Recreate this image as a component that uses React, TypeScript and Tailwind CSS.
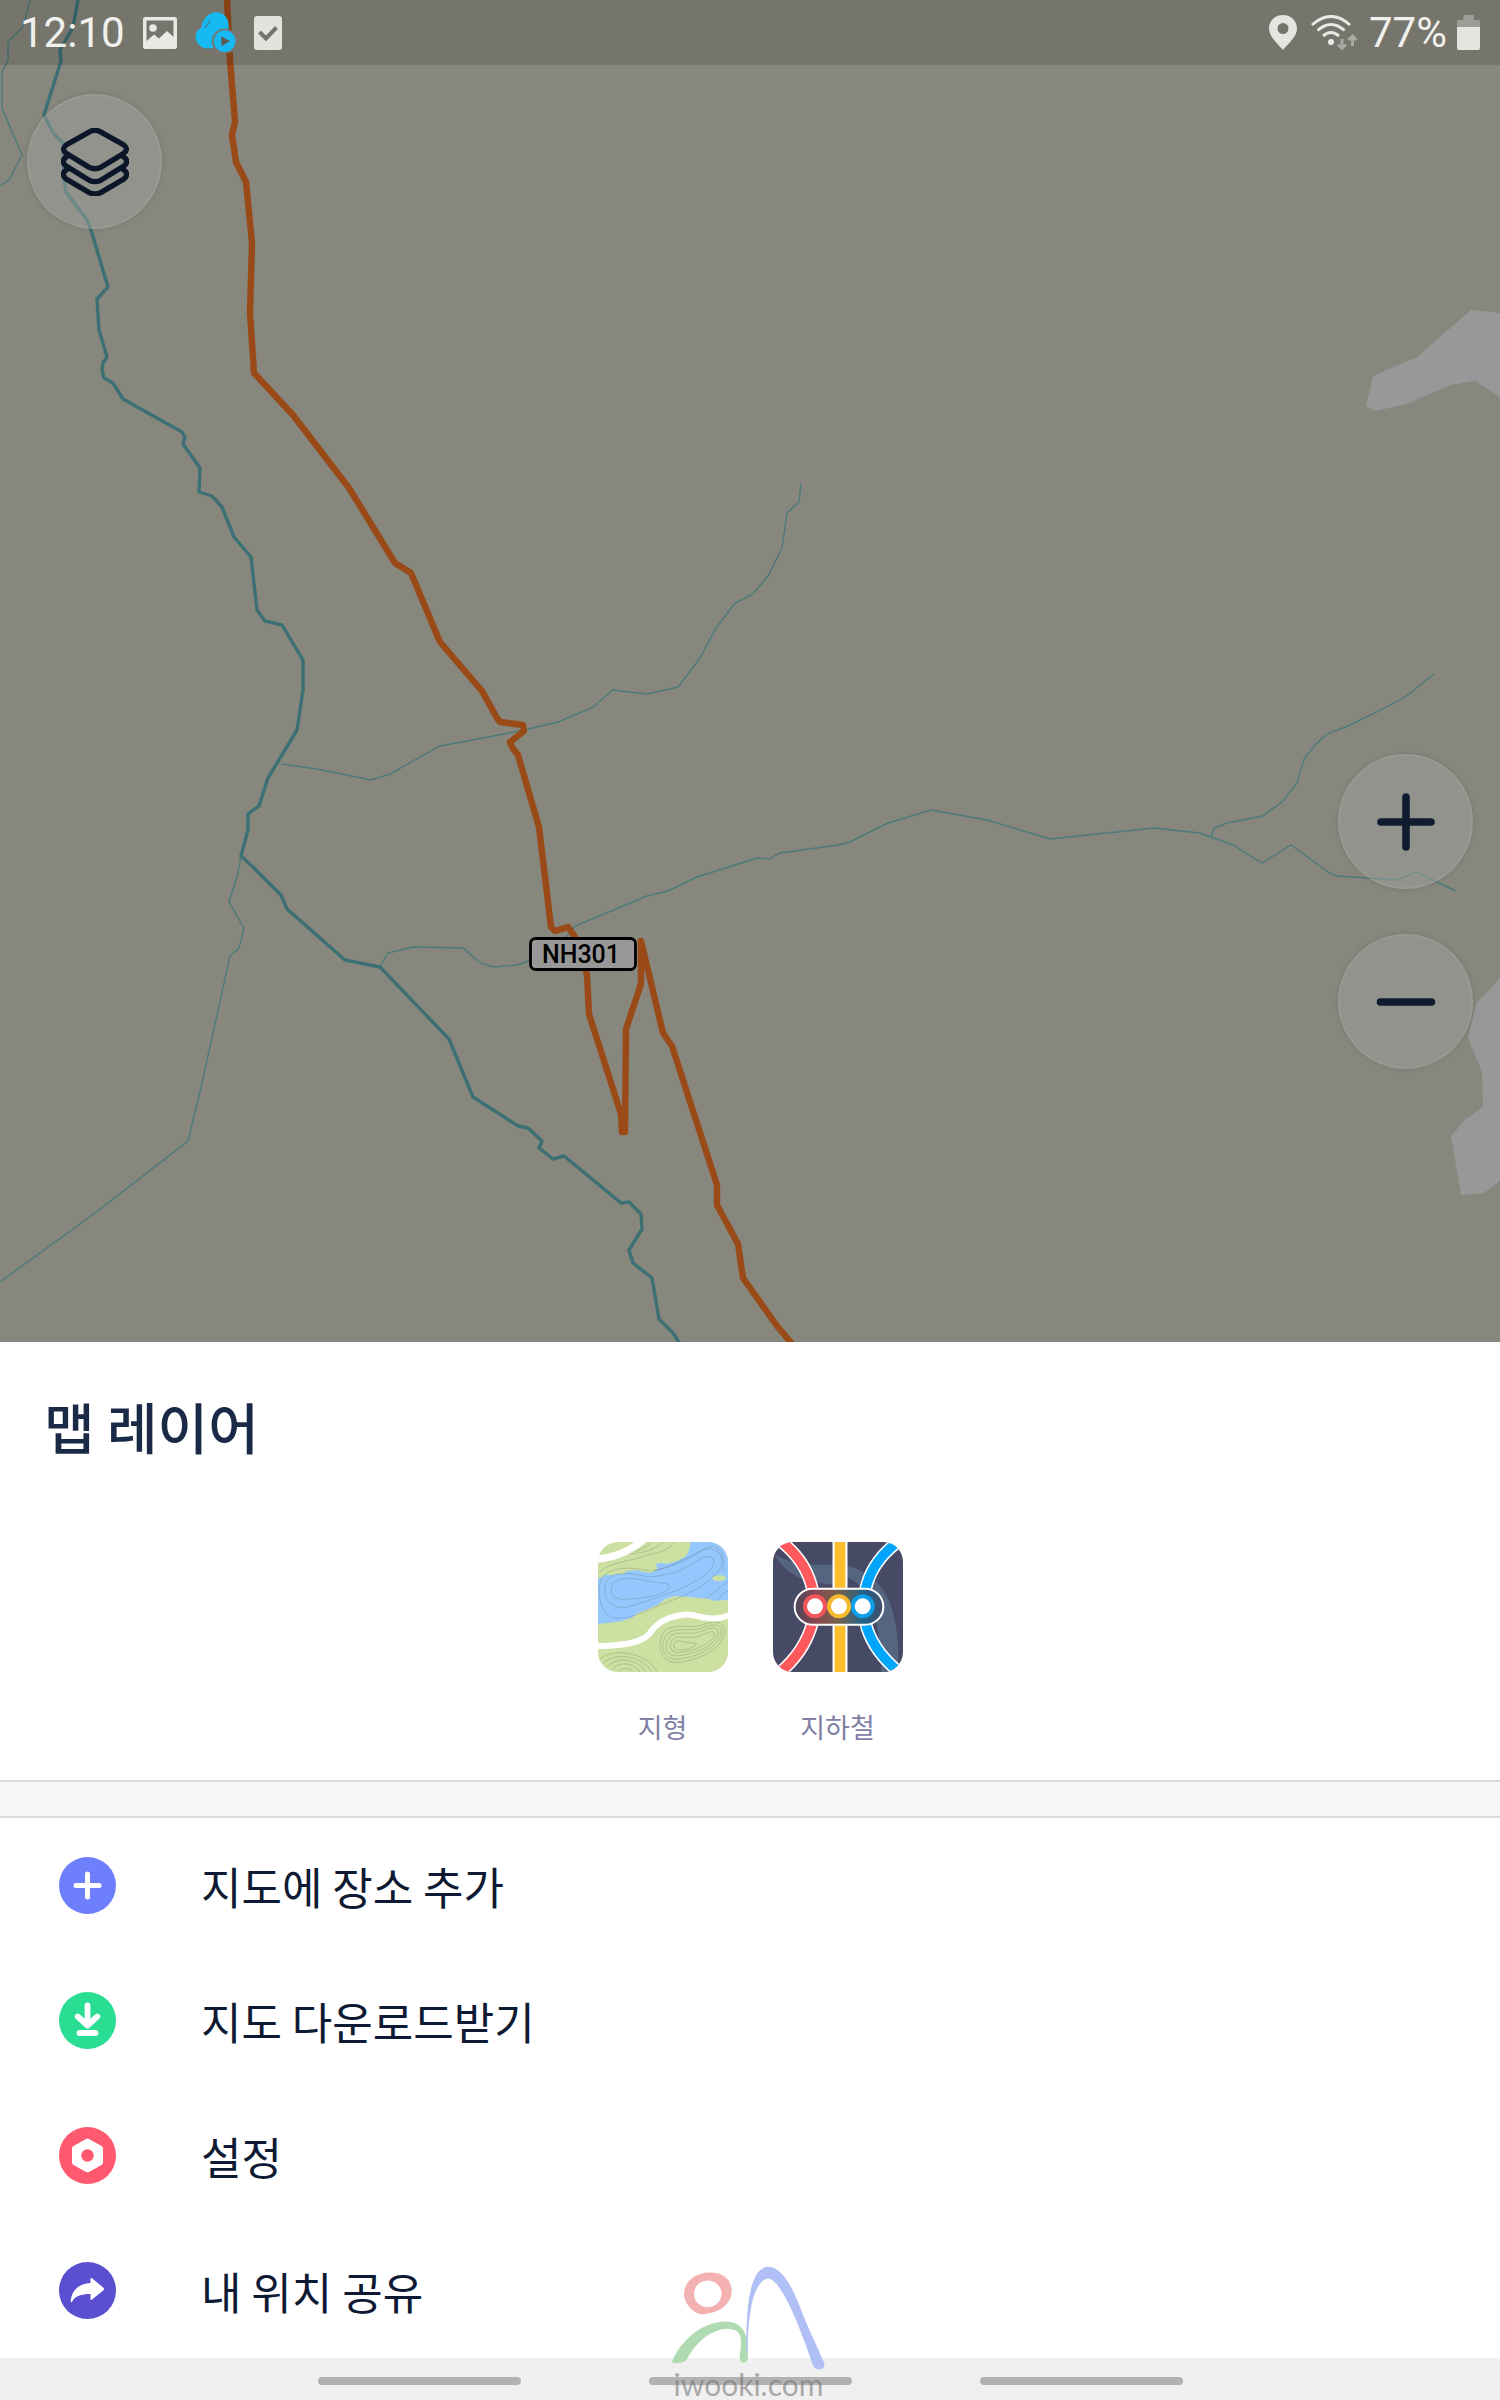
import React from 'react';

const THIN_STREAMS = [
  'M30 0 L23 27 L8 42 L8 60 L2 72 L2 108 L22 155 L9 180 L0 186',
  'M241 856 L238 873 L229 902 L244 928 L239 948 L230 956 L200 1092 L188 1141 L95 1213 L0 1282',
  'M281 764 L317 769 L371 780 L390 774 L440 746 L499 735 L528 729 L558 722 L592 708 L613 690 L647 694 L678 687 L700 658 L716 628 L735 603 L753 594 L768 576 L782 548 L787 513 L799 502 L801 484',
  'M380 967 L388 953 L413 947 L463 948 L479 962 L493 967 L517 965 L528 961 L568 935 L575 926 L647 896 L668 891 L697 877 L757 858 L769 859 L780 853 L838 845 L850 842 L888 823 L931 810 L987 820 L1050 839 L1154 828 L1200 833 L1233 845 L1262 863 L1291 845 L1328 872 L1337 876 L1367 878 L1397 880 L1416 872 L1456 891',
  'M1211 838 L1214 828 L1227 823 L1263 816 L1283 801 L1297 783 L1304 759 L1315 745 L1327 734 L1348 726 L1383 709 L1408 695 L1434 674',
];

const RIVER =
  'M78 0 L73 27 L60 50 L61 61 L44 115 L50 127 L54 134 L63 143 L64 180 L66 192 L87 220 L91 230 L108 287 L97 299 L99 330 L107 357 L103 363 L102 370 L104 378 L113 383 L123 399 L182 432 L185 437 L183 444 L200 468 L199 492 L212 496 L222 507 L234 537 L251 557 L257 610 L265 621 L282 625 L303 660 L303 690 L297 730 L268 778 L259 806 L248 814 L248 830 L241 856 L253 867 L281 895 L287 909 L345 960 L380 967 L449 1039 L473 1097 L518 1126 L528 1128 L542 1141 L539 1148 L553 1159 L564 1156 L621 1203 L629 1202 L641 1214 L642 1229 L629 1250 L633 1263 L652 1278 L659 1319 L673 1333 L680 1344';

const ROAD =
  'M227 0 L230 60 L235 122 L232 135 L236 162 L246 182 L252 243 L250 313 L254 373 L279 400 L293 415 L349 488 L395 563 L411 573 L440 642 L482 691 L497 718 L500 722 L523 725 L524 731 L510 742 L512 747 L518 755 L539 827 L551 927 L555 931 L568 927 L575 937 L587 975 L589 1014 L621 1114 L622 1132 L625 1132 L626 1029 L641 984 L641 941 L663 1033 L672 1046 L717 1185 L717 1205 L738 1244 L743 1278 L777 1326 L793 1345';

const MapCanvas: React.FC = () => (
  <svg
    className="absolute inset-0 h-full w-full"
    viewBox="0 0 1500 1342"
    preserveAspectRatio="xMinYMin slice"
    fill="none"
    aria-hidden="true"
  >
    <g fill="#989898">
      <path d="M1366 406 L1373 376 L1417 357 L1471 310 L1500 313 V397 L1475 381 L1450 385 L1407 404 L1375 411 Z" />
      <path d="M1500 978 L1476 1004 L1468 1038 L1482 1072 L1483 1107 L1466 1119 L1451 1136 L1461 1195 L1484 1193 L1500 1181 Z" />
    </g>
    <g stroke="#4c7b7b" strokeWidth="1.4">
      {THIN_STREAMS.map((d) => (
        <path key={d} d={d} />
      ))}
    </g>
    <path d={RIVER} stroke="#3c7074" strokeWidth="3.4" strokeLinejoin="round" />
    <path d={ROAD} stroke="#9a4a17" strokeWidth="6.4" strokeLinejoin="round" />
    <rect x="530.5" y="938.5" width="105" height="31" rx="5" fill="#989898" stroke="#000" strokeWidth="2.8" />
    <text x="581" y="963" textAnchor="middle" fill="#000" className="font-['Roboto',sans-serif] text-[25px] font-medium">
      NH301
    </text>
  </svg>
);

const PictureIcon = () => (
  <svg viewBox="0 0 34 32" className="h-8 w-[34px]" aria-hidden="true">
    <path
      fill="#e9e9e6"
      fillRule="evenodd"
      d="M2.5 0 H31.5 Q34 0 34 2.5 V29.5 Q34 32 31.5 32 H2.5 Q0 32 0 29.5 V2.5 Q0 0 2.5 0 Z M3.5 3.5 V24 L11 17.5 L16 21.5 L24 14 L30.5 20 V3.5 Z"
    />
    <circle cx="10" cy="11" r="3.8" fill="#e9e9e6" />
  </svg>
);

const CloudPlayIcon = () => (
  <svg viewBox="591 33 124 125" className="h-[41px] w-[41px]" fill="none" aria-hidden="true">
    <path
      fill="#16b9f2"
      d="M655 34 C677 34 693 50 693 74 V90 L645 143 C627 145 615 145 605 135 C586 118 588 92 610 80 C614 55 630 34 655 34 Z"
    />
    <path d="M635 60 Q631 72 620 80" stroke="#3c7f95" strokeWidth="4" strokeLinecap="round" />
    <circle cx="681" cy="122" r="36" fill="#16b9f2" stroke="#75756d" strokeWidth="6" />
    <path d="M671 107 L697 122 L671 137 Z" fill="#5f5850" />
  </svg>
);

const CheckBoxIcon = () => (
  <svg viewBox="0 0 28 34" className="h-[34px] w-7" fill="none" aria-hidden="true">
    <rect width="28" height="34" rx="3" fill="#e2e2df" />
    <path d="M5.5 16 L12 22.5 L22.5 11.5" stroke="#75756d" strokeWidth="4" />
  </svg>
);

const PinIcon = () => (
  <svg viewBox="0 0 28 35" className="h-[35px] w-7" aria-hidden="true">
    <path
      fill="#e4e4e1"
      fillRule="evenodd"
      d="M14 0 C22 0 28 6 28 13.5 C28 21 21 27 14 35 C7 27 0 21 0 13.5 C0 6 6 0 14 0 Z M14 8 A5.5 5.5 0 1 0 14 19 A5.5 5.5 0 1 0 14 8 Z"
    />
  </svg>
);

const WifiIcon = () => (
  <svg viewBox="0 0 46 36" className="h-9 w-[46px]" fill="none" aria-hidden="true">
    <g stroke="#e9e9e6" strokeWidth="3">
      <path d="M1 10 Q20 -7 39 10" />
      <path d="M6.5 15.5 Q20 3.5 33.5 15.5" />
      <path d="M12 21 Q20 14 28 21" />
    </g>
    <circle cx="20" cy="27" r="3" fill="#e9e9e6" />
    <g stroke="#a9a9a4" strokeWidth="3">
      <path d="M31 24 V33 M27 29.5 L31 33.5 L35 29.5" />
      <path d="M41.5 31 V21 M37.5 25 L41.5 21 L45.5 25" />
    </g>
  </svg>
);

const BatteryIcon = () => (
  <svg viewBox="0 0 23 35" className="h-[35px] w-[23px]" aria-hidden="true">
    <path fill="#9d9d98" d="M6.5 0 H17 V5 H21 Q23 5 23 7 V13 H0 V7 Q0 5 2 5 H6.5 Z" />
    <path fill="#e4e4e1" d="M0 12 H23 V33 Q23 35 21 35 H2 Q0 35 0 33 Z" />
  </svg>
);

const StatusBar: React.FC = () => (
  <header className="relative flex h-[65px] items-center justify-between bg-black/13 px-5 font-['Roboto',sans-serif] text-[42px] leading-none text-[#f0f0ed]">
    <div className="flex items-center gap-[18px]">
      <time dateTime="12:10">12:10</time>
      <PictureIcon />
      <CloudPlayIcon />
      <CheckBoxIcon />
    </div>
    <div className="flex items-center">
      <PinIcon />
      <span className="ml-[14px]">
        <WifiIcon />
      </span>
      <span className="ml-3">77%</span>
      <span className="ml-[10px]">
        <BatteryIcon />
      </span>
    </div>
  </header>
);

interface MapButtonProps {
  label: string;
  children: React.ReactNode;
}

const MapButton: React.FC<MapButtonProps> = ({ label, children }) => (
  <button
    type="button"
    aria-label={label}
    className="flex size-[135px] items-center justify-center rounded-full border-2 border-white/5 bg-[#9e9f9c]/50 shadow-[0_0_5px_rgba(0,0,0,0.12)]"
  >
    {children}
  </button>
);

const LayersIcon = () => (
  <svg viewBox="1 1 66 66" className="size-[68px]" fill="none" stroke="#0b1729" strokeWidth="5.2" strokeLinecap="round" aria-hidden="true">
    <path d="M29 4.5 Q34 2 39 4.5 L62 17.5 Q67 21.5 62 25.5 L40 39 Q34 42 28 39 L6 25.5 Q1 21.5 6 17.5 Z" />
    <path d="M7 28.5 Q0 33 6 38 L28 51.5 Q34 54.5 40 51.5 L62 38 Q68 33 61 28.5" />
    <path d="M7 41 Q0 45.5 6 50.5 L28 63.5 Q34 66.5 40 63.5 L62 50.5 Q68 45.5 61 41" />
  </svg>
);

const TerrainTile = () => (
  <svg viewBox="0 0 390 390" className="size-[130px] rounded-[20px]" fill="none" aria-hidden="true">
    <rect width="390" height="390" fill="#cce0a1" />
    <path
      fill="#94c7fd"
      d="M0 108 L15 105 L20 98 L45 100 L55 95 L75 97 L85 88 L120 84 L135 90 L160 92 L178 82 L174 65 L190 62 L205 66 L235 58 L262 44 Q275 30 278 0 H390 V174 L350 176 L330 170 L269 165 L229 162 L200 172 L184 185 L150 202 L119 213 L100 228 L69 238 L35 242 L0 245 Z"
    />
    <path d="M340 108 L355 100 L375 100 L386 108 L375 117 L352 117 Z" fill="#cce0a1" />
    <g stroke="#4c5a50" strokeOpacity="0.35" strokeWidth="2">
      <path d="M40 150 C35 100 100 105 150 118 C190 125 225 120 210 142 C185 165 120 170 80 172 C55 172 42 165 40 150 Z" />
      <path d="M22 155 C10 80 90 90 150 105 C230 100 270 75 310 50 C345 30 360 60 335 85 C280 140 180 165 90 195 C55 200 25 190 22 155 Z" />
      <path d="M5 165 C-10 70 80 70 160 88 C240 70 290 40 320 22 C380 10 385 75 350 100 C290 160 210 175 140 210 C60 240 15 240 5 165 Z" />
      <path d="M0 95 C30 60 90 60 140 42 C190 30 210 25 230 0" />
      <path d="M60 38 C110 35 160 35 195 0 M100 28 Q140 25 160 0" />
      <path d="M170 85 C250 70 300 20 345 12 Q385 20 375 90" />
      <path d="M325 170 Q370 130 390 120 M355 174 L390 145" />
      <path d="M232 300 C245 290 260 305 295 304 C290 318 260 325 240 324 C225 320 225 308 232 300 Z" />
      <path d="M222 295 C235 275 270 292 300 284 C335 268 352 262 350 280 C340 305 290 325 245 332 C215 332 212 312 222 295 Z" />
      <path d="M212 290 C225 262 270 280 305 270 C340 255 365 250 360 280 C345 315 290 335 240 342 C200 340 198 315 212 290 Z" />
      <path d="M202 283 C220 252 270 268 305 260 C350 242 375 245 370 280 C350 325 290 345 238 352 C188 350 188 310 202 283 Z" />
      <path d="M194 275 C215 240 270 260 310 250 C355 232 385 240 378 280 C360 335 290 355 235 362 C175 355 182 300 194 275 Z" />
      <path d="M5 352 C50 310 160 340 176 390 M15 365 C50 325 140 345 160 390 M28 375 C55 340 125 352 142 390 M42 385 C60 355 110 362 125 390 M60 388 Q85 370 105 388" />
    </g>
    <path d="M-5 51 C50 48 100 25 140 -10" stroke="#fff" strokeWidth="22" />
    <path d="M-5 313 C70 310 125 305 152 278 C175 245 200 225 259 218 C300 215 330 245 395 219" stroke="#fff" strokeWidth="18" />
  </svg>
);

const SubwayTile = () => (
  <svg viewBox="0 0 390 390" className="size-[130px] rounded-[20px]" fill="none" aria-hidden="true">
    <defs>
      <linearGradient id="station" x1="62" x2="332" y1="0" y2="0" gradientUnits="userSpaceOnUse">
        <stop offset="0" stopColor="#47455a" />
        <stop offset="0.25" stopColor="#8a4852" />
        <stop offset="0.5" stopColor="#75624c" />
        <stop offset="0.78" stopColor="#21628a" />
        <stop offset="1" stopColor="#464d68" />
      </linearGradient>
    </defs>
    <rect width="390" height="390" fill="#474a64" />
    <path d="M5 35 C80 85 150 60 215 70 C330 95 385 190 375 390 H325 C320 310 320 230 280 150 C220 110 60 155 5 35 Z" fill="#56657f" />
    <path d="M203 100 C270 110 320 190 322 390 H203 Z" fill="#474a64" />
    <g stroke="#fff" strokeWidth="38">
      <path d="M20 -5 Q100 55 119 145 M119 240 Q95 330 20 392" />
      <path d="M372 2 Q295 60 277 145 M277 240 Q295 320 372 385" />
      <path d="M201 0 V390" strokeWidth="45" />
    </g>
    <g strokeWidth="29">
      <path d="M18 -7 Q100 55 119 145 M119 240 Q95 330 18 394" stroke="#ff595d" />
      <path d="M374 0 Q295 60 277 145 M277 240 Q295 320 374 387" stroke="#00a6fb" />
      <path d="M201 0 V390" stroke="#fdbe2c" strokeWidth="32" />
    </g>
    <rect x="65" y="140" width="266" height="108" rx="54" fill="url(#station)" stroke="#fff" strokeWidth="6" />
    <g fill="#fff" strokeWidth="12">
      <circle cx="126" cy="193" r="30" stroke="#f2555c" />
      <circle cx="269" cy="193" r="30" stroke="#0c9fe8" />
      <circle cx="198" cy="193" r="30" stroke="#f7b92e" />
    </g>
  </svg>
);

const AddIcon = () => (
  <svg viewBox="0 0 57 57" className="size-[57px]" fill="none" aria-hidden="true">
    <circle cx="28.5" cy="28.5" r="28.5" fill="#6e7ffc" />
    <path d="M28.5 17 V40 M17 28.5 H40" stroke="#fff" strokeWidth="5" strokeLinecap="round" />
  </svg>
);

const DownloadIcon = () => (
  <svg viewBox="0 0 57 57" className="size-[57px]" fill="none" aria-hidden="true">
    <circle cx="28.5" cy="28.5" r="28.5" fill="#29de92" />
    <path
      d="M28.5 13.5 V33 M18.7 24.5 L28.5 33.5 L38.3 24.5 M20.5 41 H36.5"
      stroke="#fff"
      strokeWidth="5.8"
      strokeLinecap="round"
      strokeLinejoin="round"
    />
  </svg>
);

const SettingsIcon = () => (
  <svg viewBox="0 0 57 57" className="size-[57px]" aria-hidden="true">
    <circle cx="28.5" cy="28.5" r="28.5" fill="#ff596f" />
    <path d="M28.5 14.5 L41 21.5 V35.5 L28.5 42.5 L16 35.5 V21.5 Z" fill="#fff" stroke="#fff" strokeWidth="6" strokeLinejoin="round" />
    <circle cx="28.5" cy="28.5" r="6.2" fill="#ff596f" />
  </svg>
);

const ShareIcon = () => (
  <svg viewBox="0 0 57 57" className="size-[57px]" aria-hidden="true">
    <circle cx="28.5" cy="28.5" r="28.5" fill="#5a4ed1" />
    <path
      fill="#fff"
      d="M44.5 25.8 Q45.5 27 44.5 28.2 L33 37.5 Q31.5 38.5 31.5 37 V32 C22 32 16 34 13.2 39.5 Q12 41 11.7 39.3 C12.5 29 19 21.8 31.5 21 V17 Q31.5 15.3 33 16.3 Z"
    />
  </svg>
);

const LAYERS = [
  { name: '지형', tile: <TerrainTile /> },
  { name: '지하철', tile: <SubwayTile /> },
];

const MENU = [
  { name: '지도에 장소 추가', icon: <AddIcon /> },
  { name: '지도 다운로드받기', icon: <DownloadIcon /> },
  { name: '설정', icon: <SettingsIcon /> },
  { name: '내 위치 공유', icon: <ShareIcon /> },
];

const Watermark: React.FC = () => (
  <div className="pointer-events-none absolute inset-x-0 bottom-0 flex flex-col items-center pr-[3px]">
    <svg viewBox="215 130 465 320" className="h-[107px] w-[155px]" aria-hidden="true">
      <path
        fill="#f4b1b2"
        fillRule="evenodd"
        d="M330 155 C375 155 398 178 397 212 C396 250 360 279 305 280 C285 278 254 250 254 220 C256 180 288 156 330 155 Z M325 179 C300 180 284 198 284 220 C284 243 304 258 325 259 C350 258 366 240 367 218 C366 195 348 180 325 179 Z"
      />
      <path
        fill="#b0dab2"
        d="M219 420 C245 360 305 303 380 302 C432 303 448 340 446 410 Q444 425 433 426 Q421 425 421 408 C428 360 432 325 385 324 C335 326 295 360 263 414 Q258 427 228 427 Q217 428 219 420 Z"
      />
      <path
        fill="#b1bff7"
        d="M441 395 C440 260 450 142 505 138 C555 136 590 225 612 285 C630 330 655 380 674 425 Q680 443 661 446 Q646 446 640 430 C612 350 550 175 506 173 C470 180 446 245 445 395 Z"
      />
    </svg>
    <p className="pb-[3px] font-['Lato',sans-serif] text-[30px] leading-[26px] text-[#777]/60">iwooki.com</p>
  </div>
);

export default function App() {
  return (
    <div className="relative flex min-h-screen flex-col bg-white font-['Noto_Sans_CJK_KR',sans-serif]">
      {/* Map */}
      <main className="relative min-h-[1100px] flex-1 overflow-hidden bg-[#87877d]">
        <MapCanvas />
        <StatusBar />
        <div className="relative mt-[29px] ml-[27px] w-fit">
          <MapButton label="맵 레이어">
            <LayersIcon />
          </MapButton>
        </div>
        <div className="absolute right-[27px] bottom-[273px] flex flex-col gap-[45px]">
          <MapButton label="확대">
            <svg viewBox="0 0 60 60" className="size-[60px]" stroke="#101c2f" strokeWidth="7.6" strokeLinecap="round" aria-hidden="true">
              <path d="M5 30 H55 M30 5 V55" />
            </svg>
          </MapButton>
          <MapButton label="축소">
            <svg viewBox="0 0 60 60" className="size-[60px]" stroke="#101c2f" strokeWidth="7.6" strokeLinecap="round" aria-hidden="true">
              <path d="M4.5 30 H55.5" />
            </svg>
          </MapButton>
        </div>
      </main>

      {/* Layers */}
      <section className="border-b-2 border-[#d8d9e0] px-11 pt-[51px] pb-[35px]">
        <h1 className="text-[55px] leading-[64px] font-medium text-[#1a2945]">맵 레이어</h1>
        <div className="mt-[85px] flex justify-center gap-[45px]">
          {LAYERS.map((layer) => (
            <button key={layer.name} type="button" className="flex flex-col items-center gap-[37px]">
              {layer.tile}
              <span className="text-[27px] leading-[36px] text-[#7f80a4]">{layer.name}</span>
            </button>
          ))}
        </div>
      </section>
      <div className="h-9 border-b-2 border-[#d8d9e0] bg-[#f6f6f9]" />

      {/* Menu */}
      <ul>
        {MENU.map((item) => (
          <li key={item.name}>
            <button type="button" className="flex h-[135px] w-full items-center gap-[85px] pl-[59px] text-left">
              {item.icon}
              <span className="text-[44px] leading-[60px] text-[#0e1a33]">{item.name}</span>
            </button>
          </li>
        ))}
      </ul>

      {/* System navigation */}
      <nav className="flex h-[42px] items-center justify-center gap-32 bg-[#f0f0f0] pt-1">
        {['최근 앱', '홈', '뒤로'].map((name) => (
          <button key={name} type="button" aria-label={name} className="h-2 w-[203px] rounded-full bg-[#b2b2b2]" />
        ))}
      </nav>
      <Watermark />
    </div>
  );
}
